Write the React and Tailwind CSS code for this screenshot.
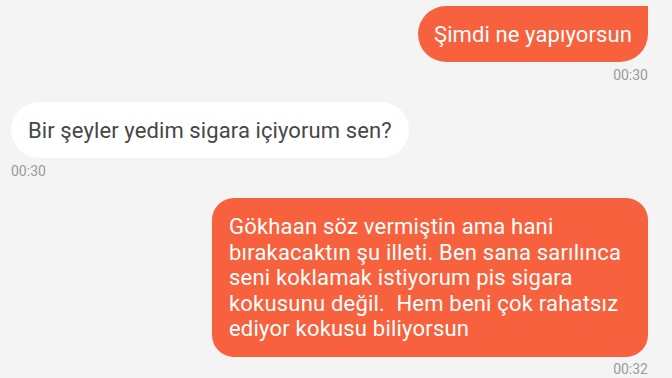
import React from 'react'

const font = { fontFamily: 'Roboto, "Noto Sans", sans-serif' }

function Stamp({ time, right }) {
    return (
        <div className={`text-[14px] leading-[16px] text-[#9a9a9a] ${right ? 'self-end' : 'self-start'}`}>
            {time}
        </div>
    )
}

export default function App() {
    const longText = [
        'Gökhaan söz vermiştin ama hani',
        'bırakacaktın şu illeti. Ben sana sarılınca',
        'seni koklamak istiyorum pis sigara',
        'kokusunu değil.  Hem beni çok rahatsız',
        'ediyor kokusu biliyorsun',
    ]

    return (
        <div style={font} className="h-[378px] w-[672px] overflow-hidden bg-[#f4f4f4] pl-[11px] pr-[24px] pt-[6px]">
            <div className="flex flex-col items-end">
                <div className="flex h-[56px] items-center rounded-[28px] rounded-tr-none bg-[#f8613d] px-[16px] text-[22px] tracking-[0.1px] text-white">
                    Şimdi ne yapıyorsun
                </div>
                <div className="mt-[5px]">
                    <Stamp time="00:30" right />
                </div>
            </div>

            <div className="mt-[19px] flex flex-col items-start">
                <div className="flex h-[56px] items-center rounded-[28px] bg-white px-[17px] text-[22px] tracking-[0.1px] text-[#474747]">
                    Bir şeyler yedim sigara içiyorum sen?
                </div>
                <div className="mt-[5px]">
                    <Stamp time="00:30" />
                </div>
            </div>

            <div className="mt-[19px] flex flex-col items-end">
                <div className="w-[436px] rounded-[22px] bg-[#f8613d] px-[17px] pb-[15.5px] pt-[16px] text-[22px] leading-[25.5px] tracking-[0.2px] text-white">
                    {longText.map((l, i) => (
                        <div key={i} className="whitespace-pre">{l}</div>
                    ))}
                </div>
                <div className="mt-[4px]">
                    <Stamp time="00:32" right />
                </div>
            </div>
        </div>
    )
}
